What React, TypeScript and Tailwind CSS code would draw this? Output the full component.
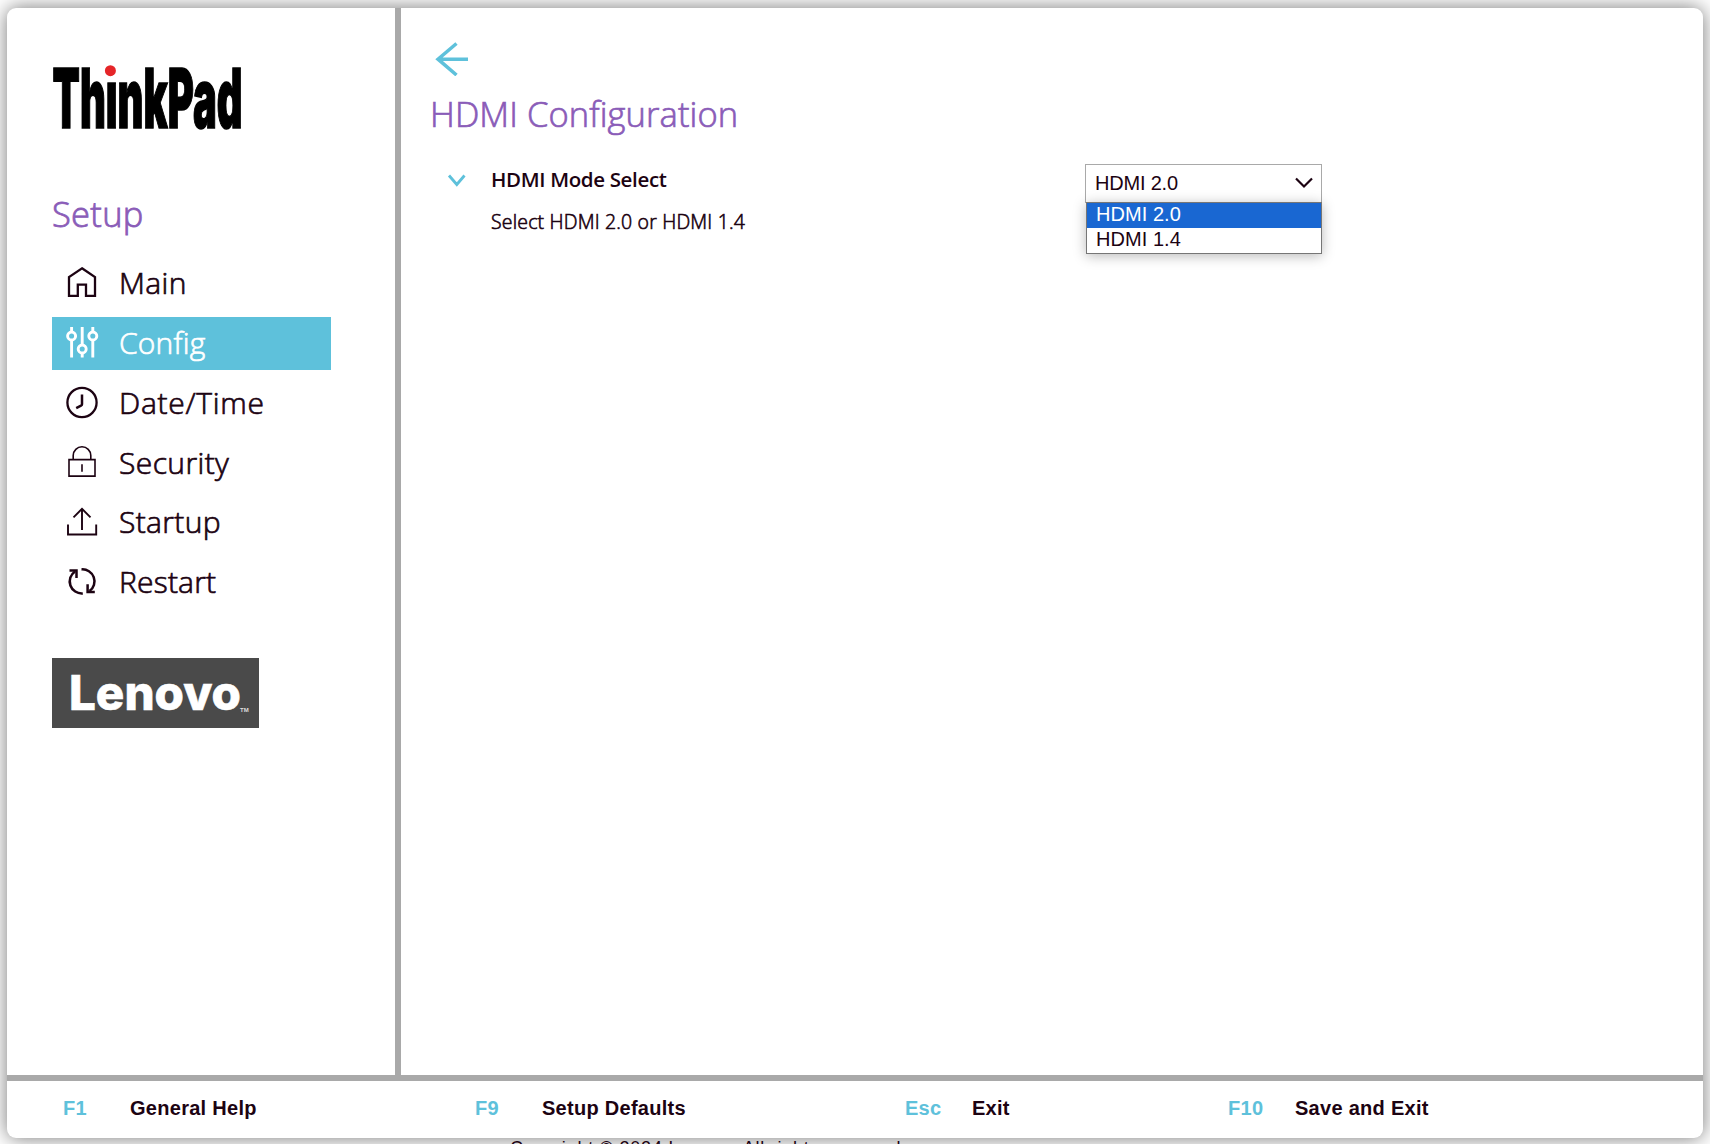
import React from 'react';

const sans = 'font-["Open_Sans",sans-serif]';
const arial = 'font-["Liberation_Sans",Arial,sans-serif]';

function HomeIcon() {
  return <path d="M18 11.3 31 20v18.8h-9V27.6h-8.2v11.2H5V20Z" strokeWidth="2.3" />;
}
function ConfigIcon() {
  return (
    <g strokeWidth="2.9">
      <path d="M7.6 10v5M7.6 23v17.5M18.2 10v18M18.2 36v4.5M28.8 10v5M28.8 23v17.5" />
      <circle cx="7.6" cy="19" r="4" />
      <circle cx="18.2" cy="32" r="4" />
      <circle cx="28.8" cy="19" r="4" />
    </g>
  );
}
function ClockIcon() {
  return (
    <>
      <circle cx="18" cy="25.5" r="14.6" strokeWidth="2.3" />
      <path d="M18 17.6v9.6c0 .8-.4 1.2-1 1.5l-4.8 2.5" strokeWidth="2.5" />
    </>
  );
}
function LockIcon() {
  return <path d="M5 22.6h26v16.5H5ZM9.2 22.6v-4a8.8 8.8 0 0 1 17.6 0v4M18 27.3v7.5" strokeWidth="1.6" />;
}
function StartupIcon() {
  return <path d="M18 34V13M9.5 21.3 18 12.8l8.5 8.5M4 28.5V38.5h28.2V28.5" strokeWidth="1.9" />;
}
function RestartIcon() {
  return (
    <g strokeWidth="2.5">
      <path d="M17.5 13.4a12 12 0 0 1 8 21.7" />
      <path d="M18.800 37.4a12 12 0 0 1-7.8-21.9" />
      <path d="M5.5 14.5h7v7.6M30.8 35.9h-7.2v-7.6" />
    </g>
  );
}

const nav = [
  { label: 'Main', Icon: HomeIcon, tracking: 'tracking-[0.4px]' },
  { label: 'Config', Icon: ConfigIcon, tracking: 'tracking-[0.2px]', active: true },
  { label: 'Date/Time', Icon: ClockIcon, tracking: 'tracking-[0.7px]' },
  { label: 'Security', Icon: LockIcon, tracking: 'tracking-[0.4px]' },
  { label: 'Startup', Icon: StartupIcon, tracking: 'tracking-[0.35px]' },
  { label: 'Restart', Icon: RestartIcon, tracking: 'tracking-[0.2px]' },
];

const keys = [
  { k: 'F1', label: 'General Help', box: 'w-[412px]' },
  { k: 'F9', label: 'Setup Defaults', box: 'w-[430px]' },
  { k: 'Esc', label: 'Exit', box: 'w-[323px]' },
  { k: 'F10', label: 'Save and Exit', box: 'w-[240px]' },
];

function ThinkPadLogo() {
  return (
    <svg width="200" height="76" viewBox="0 0 200 76" className="block overflow-visible">
      <text
        x="0.5"
        y="66.3"
        fontFamily="Inter, sans-serif"
        fontWeight="900"
        fontSize="83"
        textLength="190"
        lengthAdjust="spacingAndGlyphs"
        stroke="#000"
        strokeWidth="1.6"
      >
        ThinkPad
      </text>
      <rect x="52.5" y="-3" width="12" height="20" fill="#fff" />
      <circle cx="58.400" cy="8.700" r="5.5" fill="#e52528" />
    </svg>
  );
}

function LenovoLogo() {
  return (
    <svg width="207" height="70" viewBox="0 0 207 70" className="block bg-[#4a4a4a]">
      <text x="17" y="51.500" fill="#fff" stroke="#fff" strokeWidth="0.6" fontFamily="Inter, sans-serif" fontWeight="800" fontSize="47.5" textLength="172" lengthAdjust="spacingAndGlyphs">
        Lenovo
      </text>
      <text x="188" y="54" fill="#ddd" fontFamily="Liberation Sans, sans-serif" fontSize="6" fontWeight="700">
        TM
      </text>
    </svg>
  );
}

export default function App() {
  return (
    <div className="flex h-[1144px] w-[1710px] flex-col overflow-hidden bg-white pl-[7px] pt-2 text-[#1c0312]">
      <div className="flex h-[1130px] w-[1696px] shrink-0 flex-col overflow-hidden rounded-[9px] bg-white shadow-[0_0_20px_rgba(0,0,0,0.54)]">
        <div className="flex h-[1067px]">
          <aside className={`w-[394px] shrink-0 border-r-[6px] border-[#a9a9a9] pl-[45px] pt-[54px] ${sans}`}>
            <ThinkPadLogo />
            <h2 className="mt-[55.5px] text-[34.5px] font-light leading-[40px] tracking-[0.3px] text-[#8a5cb8] [-webkit-text-stroke:0.8px_#8a5cb8]">Setup</h2>
            <nav className="mt-[23.7px] flex w-[279px] flex-col gap-[6.8px]">
              {nav.map(({ label, Icon, tracking, active }) => (
                <a key={label} className={`flex h-[53px] items-center pl-3 ${active ? 'bg-[#5ec1db] text-white' : ''}`}>
                  <svg width="36" height="53" viewBox="0 0 36 53" fill="none" stroke="currentColor" strokeLinecap="butt">
                    <Icon />
                  </svg>
                  <span className={`ml-[19px] pb-[2px] text-[30px] font-light leading-[51px] [-webkit-text-stroke:0.7px_currentColor] ${tracking}`}>{label}</span>
                </a>
              ))}
            </nav>
            <div className="mt-[49px]">
              <LenovoLogo />
            </div>
          </aside>

          <main className={`flex-1 pl-[29px] pt-[34px] ${sans}`}>
            <svg width="36" height="34" viewBox="0 0 36 34" fill="none" stroke="#5ec1db" strokeWidth="3.500" className="ml-[4px] block">
              <path d="M34 17.200H4M22.500 1.500 4 17.200 22.500 33" />
            </svg>
            <h1 className="mt-[18px] text-[34.5px] font-light leading-[40px] tracking-[0.08px] text-[#8a5cb8] [-webkit-text-stroke:0.7px_#8a5cb8]">HDMI Configuration</h1>
            <div className="mt-[29.5px] flex">
              <svg width="20" height="14" viewBox="0 0 20 14" fill="none" stroke="#5ec1db" strokeWidth="2.8" className="ml-[17px] mt-[10px]">
                <path d="M2 1.500 9.800 10.500 17.500 1.500" />
              </svg>
              <div className="ml-[24px] w-[594px]">
                <div className="-mt-px text-[20.5px] font-semibold leading-8 tracking-[-0.35px]">HDMI Mode Select</div>
                <div className="mt-[11.5px] text-[19.5px] font-light leading-8 tracking-[0.17px] [-webkit-text-stroke:0.6px_currentColor]">Select HDMI 2.0 or HDMI 1.4</div>
              </div>
              <div className={`relative w-[237px] text-[20px] ${arial}`}>
                <div className="flex h-[39px] items-center justify-between border border-[#a9a9a9] pl-[9px] pr-[8px]">
                  <span className="tracking-[-0.2px]">HDMI 2.0</span>
                  <svg width="18" height="12" viewBox="0 0 18 12" fill="none" stroke="currentColor" strokeWidth="2.2">
                    <path d="M1 1.500 9 9.500l8-8" />
                  </svg>
                </div>
                <div className="absolute left-px top-[38px] w-[236px] border border-[#767676] bg-white leading-[23px] tracking-[0.05px] shadow-[0_2px_12px_rgba(0,0,0,0.28)]">
                  <div className="h-[25px] bg-[#1967d2] pl-[9px] text-white">HDMI 2.0</div>
                  <div className="h-[25px] pl-[9px]">HDMI 1.4</div>
                </div>
              </div>
            </div>
          </main>
        </div>
        <footer className={`flex h-[63px] border-t-[6px] border-[#a9a9a9] pl-[56px] pt-[14px] text-[20px] font-bold leading-[26px] tracking-[0.28px] ${arial}`}>
          {keys.map(({ k, label, box }) => (
            <div key={k} className={`flex ${box}`}>
              <span className="w-[67px] text-[#5ec1db]">{k}</span>
              <span>{label}</span>
            </div>
          ))}
        </footer>
      </div>
      <div className={`ml-[503px] shrink-0 whitespace-nowrap text-[18px] leading-[20px] tracking-[0.77px] ${arial}`}>Copyright © 2024 Lenovo. All rights reserved.</div>
    </div>
  );
}
